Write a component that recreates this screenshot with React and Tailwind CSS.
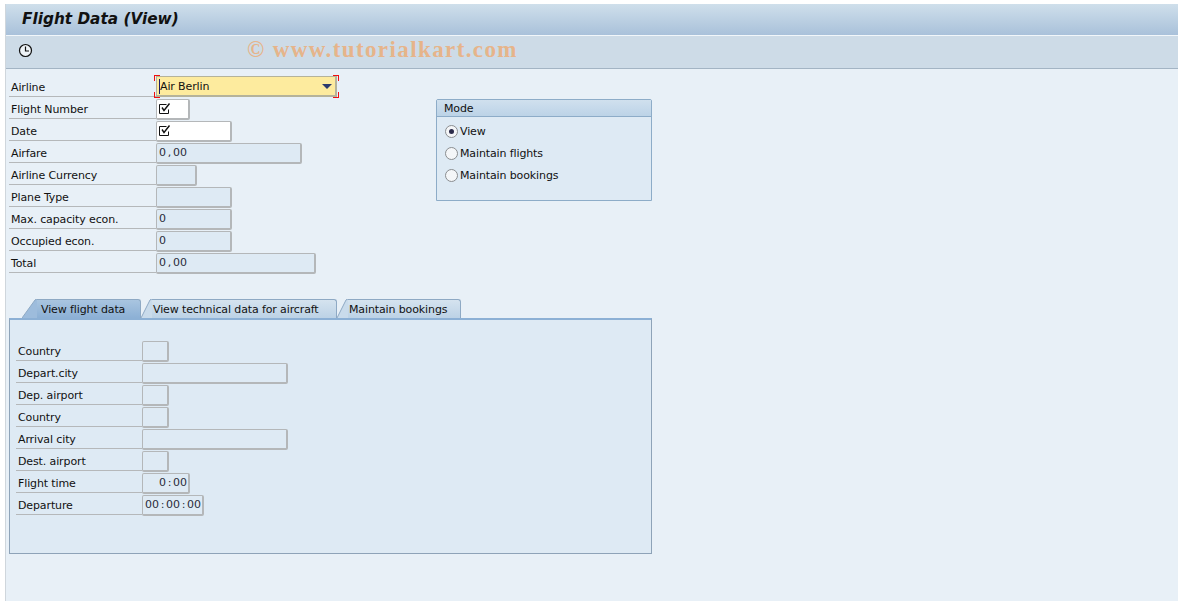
import React from "react";

const headerRows = [
  { label: "Flight Number", width: "w-[34px]", check: true },
  { label: "Date", width: "w-[76px]", check: true },
  { label: "Airfare", width: "w-[146px]", value: "0,00" },
  { label: "Airline Currency", width: "w-[41px]" },
  { label: "Plane Type", width: "w-[76px]" },
  { label: "Max. capacity econ.", width: "w-[76px]", value: "0" },
  { label: "Occupied econ.", width: "w-[76px]", value: "0" },
  { label: "Total", width: "w-[160px]", value: "0,00" },
];

const detailRows = [
  { label: "Country", width: "w-[27px]" },
  { label: "Depart.city", width: "w-[146px]" },
  { label: "Dep. airport", width: "w-[27px]" },
  { label: "Country", width: "w-[27px]" },
  { label: "Arrival city", width: "w-[146px]" },
  { label: "Dest. airport", width: "w-[27px]" },
  { label: "Flight time", width: "w-[48px]", value: "0:00", right: true },
  { label: "Departure", width: "w-[62px]", value: "00:00:00" },
];

function CheckMark() {
  return (
    <svg width="12" height="12" viewBox="0 0 12 12" className="block" fill="none">
      <path d="M9.5 6.5v4h-9v-9h7" stroke="#111" strokeWidth="1" />
      <path d="M3 4.5 L5 7.5 L10.5 0.5" stroke="#111" strokeWidth="1.4" />
    </svg>
  );
}

function Field({ width, value, check, right }) {
  return (
    <div
      className={`${width} h-[21px] mt-[1px] flex items-center border border-[#b4b7b9] border-b-2 border-r-2 rounded-[2px] ${
        check ? "bg-white pl-[2px]" : "bg-[#deeaf4] px-[1px]"
      } ${right ? "justify-end" : ""}`}
    >
      {check && <CheckMark />}
      {value && (
        <span className={`flex text-[11px] text-[#2a2a3a] whitespace-nowrap ${right ? "" : "pl-[1px]"}`}>
          {/* fixed cell per character, the field text is monospaced */}
          {value.split("").map((ch, i) => (
            <span key={i} className="w-[7px] text-center">{ch}</span>
          ))}
        </span>
      )}
    </div>
  );
}

function Row({ label, labelWidth, ...field }) {
  return (
    <div className="flex h-[22px]">
      <div className={`${labelWidth} h-[21px] border-b border-[#b5b8ba] pl-[2px] pt-[3px] text-[11px] tracking-[-0.12px] leading-[18px] text-[#111]`}>
        {label}
      </div>
      <Field {...field} />
    </div>
  );
}

function Radio({ label, on }) {
  return (
    <div className="flex items-center h-[22px]">
      <span className="w-[13px] h-[13px] rounded-full border border-[#8a8d90] bg-[#f4f6f8] flex items-center justify-center">
        {on && <span className="w-[5px] h-[5px] rounded-full bg-[#2b2b4a]" />}
      </span>
      <span className="ml-[2px] mt-[2px] text-[11px] tracking-[-0.12px] text-[#111]">{label}</span>
    </div>
  );
}

function Tab({ label, active, width }) {
  const slant = active ? "M0 19 L13 1 Q14 0 15 0" : "M0 19 L9 1 Q10 0 11 0";
  return (
    <div className="flex h-[19px] items-end">
      <svg width={active ? 15 : 11} height="19" viewBox={active ? "0 0 15 19" : "0 0 11 19"} className="block shrink-0">
        <path d={`${slant} V19 Z`} fill={active ? "#9dbcdc" : "#c9dbeb"} />
        <path d={slant} stroke="#8ea9c4" strokeWidth="1" fill="none" />
      </svg>
      <div
        className={`${width} h-[19px] border-t border-r border-[#8ea9c4] rounded-tr-[3px] text-[11px] tracking-[-0.12px] leading-[20px] text-[#111] whitespace-nowrap ${
          active ? "pl-[4px] bg-gradient-to-b from-[#a9c5e0] to-[#8cb0d5]" : "pl-[1px] bg-gradient-to-b from-[#d5e3ef] to-[#bcd2e6]"
        }`}
      >
        {label}
      </div>
    </div>
  );
}

export default function App() {
  return (
    <div className="w-[1178px] h-[601px] overflow-hidden bg-white pt-[4px] pl-[5px] font-['DejaVu_Sans',sans-serif]">
      <div className="h-[597px] bg-[#e8f0f7] border-l border-[#cfd6dc]">
        {/* Title */}
        <div className="h-[32px] bg-gradient-to-b from-[#cfdfeb] to-[#a9c1da] border-b border-[#f1f6fa] pl-[16px] pt-[3px]">
          <span className="font-bold italic text-[15.3px] leading-[20px] text-[#111]">
            Flight Data (View)
          </span>
        </div>

        {/* Toolbar */}
        <div className="h-[33px] bg-[#cddbe7] border-b border-[#a3b4c4] flex items-center pl-[12px] pb-[3px]">
          <svg width="15" height="15" viewBox="0 0 15 15" fill="none">
            <circle cx="7.5" cy="7.5" r="6" stroke="#111" strokeWidth="1.2" fill="#eef3f7" />
            <path d="M7.5 3.5V8H11" stroke="#111" strokeWidth="1.2" />
          </svg>
          <span className="ml-[214px] font-['Liberation_Serif',serif] font-bold text-[23px] tracking-[1.4px] text-[#e6b48a]">
            © www.tutorialkart.com
          </span>
        </div>

        {/* Header fields and mode group */}
        <div className="flex pl-[3px] pt-[7px]">
          <div className="w-[427px]">
            <div className="flex h-[22px]">
              <div className="w-[147px] h-[21px] border-b border-[#b5b8ba] pl-[2px] pt-[3px] text-[11px] tracking-[-0.12px] leading-[18px] text-[#111]">
                Airline
              </div>
              <div className="relative w-[181px] h-[21px] bg-[#fdeb9e] border border-b-2 border-r-2 border-[#b5b39a] flex items-center justify-between pl-[2px] pr-[3px]">
                <span className="border-l border-[#1a1a6a] mt-[1px] text-[11px] tracking-[-0.12px] leading-[15px] text-[#111]">Air Berlin</span>
                <span className="w-0 h-0 border-x-[5px] border-x-transparent border-t-[5px] border-t-[#2b3a6e]" />
                <span className="absolute -left-[3px] -top-[2px] w-[6px] h-[6px] border-l border-t border-[#f01010]" />
                <span className="absolute -right-[4px] -top-[2px] w-[6px] h-[6px] border-r border-t border-[#f01010]" />
                <span className="absolute -left-[3px] -bottom-[3px] w-[6px] h-[6px] border-l border-b border-[#f01010]" />
                <span className="absolute -right-[4px] -bottom-[3px] w-[6px] h-[6px] border-r border-b border-[#f01010]" />
              </div>
            </div>
            {headerRows.map((row) => (
              <Row key={row.label} labelWidth="w-[147px]" {...row} />
            ))}
          </div>

          <div className="mt-[23px] w-[216px] h-[102px] border border-[#8dacc8] rounded-t-[2px] bg-[#deeaf4]">
            <div className="h-[17px] bg-gradient-to-b from-[#d0e0ee] to-[#bcd3e7] border-b border-[#8dacc8] pl-[7px] text-[11px] tracking-[-0.12px] leading-[18px] text-[#111]">
              Mode
            </div>
            <div className="pl-[8px] pt-[3px]">
              <Radio label="View" on />
              <Radio label="Maintain flights" />
              <Radio label="Maintain bookings" />
            </div>
          </div>
        </div>

        {/* Tab strip */}
        <div className="pl-[3px] pt-[25px]">
          <div className="flex pl-[13px]">
            <Tab label="View flight data" active width="w-[104px]" />
            <Tab label="View technical data for aircraft" width="w-[185px]" />
            <Tab label="Maintain bookings" width="w-[113px]" />
          </div>
          <div className="w-[643px] h-[236px] border border-[#8ea3b8] border-t-[2px] border-t-[#8cb0d5] bg-[#deeaf4] pl-[6px] pt-[20px]">
            {detailRows.map((row, i) => (
              <Row key={i} labelWidth="w-[126px]" {...row} />
            ))}
          </div>
        </div>
      </div>
    </div>
  );
}
